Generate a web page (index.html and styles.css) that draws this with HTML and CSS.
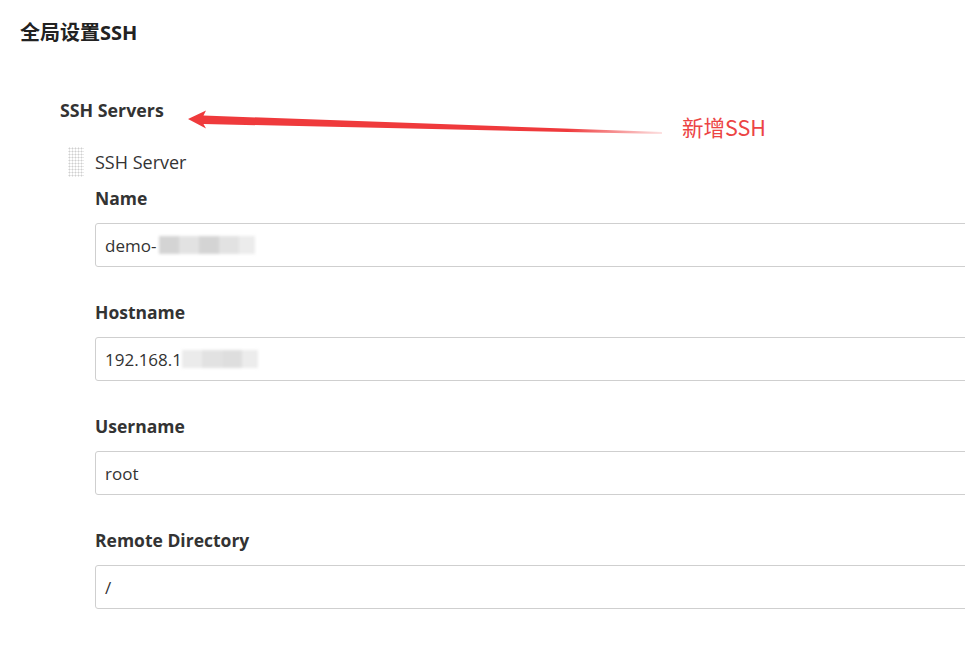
FILE: index.html
```html
<!DOCTYPE html>
<html lang="zh-CN">
<head>
  <meta charset="UTF-8" />
  <meta name="viewport" content="width=device-width, initial-scale=1.0" />
  <title>全局设置SSH</title>
  <link rel="stylesheet" href="styles.css">
</head>
<body>

<div class="page">
  <h1 class="section-title">全局设置SSH</h1>

  <!-- ssh servers -->
  <div class="servers">
    <h2 class="servers-title">SSH Servers</h2>

    <div class="chunk">
      <div class="handle"></div>
      <div class="chunk-body">
        <div class="chunk-name">SSH Server</div>

        <div class="field">
          <div class="field-label">Name</div>
          <div class="field-input">demo-<span class="masked masked-name"><i></i><i></i><i></i><i></i><i></i></span></div>
        </div>

        <div class="field">
          <div class="field-label">Hostname</div>
          <div class="field-input">192.168.1<span class="masked masked-host"><i></i><i></i><i></i><i></i></span></div>
        </div>

        <div class="field">
          <div class="field-label">Username</div>
          <div class="field-input">root</div>
        </div>

        <div class="field">
          <div class="field-label">Remote Directory</div>
          <div class="field-input">/</div>
        </div>
      </div>
    </div>
  </div>
</div>

<!-- annotation -->
<svg class="note-arrow" width="700" height="160" viewBox="0 0 700 160">
  <defs>
    <linearGradient id="fade" x1="188" y1="0" x2="662" y2="0" gradientUnits="userSpaceOnUse">
      <stop offset="0" stop-color="#ef3a3c"/>
      <stop offset="0.8" stop-color="#ef3a3c"/>
      <stop offset="1" stop-color="#ef3a3c" stop-opacity="0.15"/>
    </linearGradient>
  </defs>
  <polygon fill="url(#fade)" points="188,119 206,110.5 203.5,115.5 662,132 662,134 203.5,124 206,128.5"/>
</svg>
<div class="note-text">新增SSH</div>

</body>
</html>
```

FILE: styles.css
```css
  /* ─── page base ─────────────────────────────────────────── */
  body {
    margin: 0;
    font-family: "Open Sans", "Noto Sans CJK SC", sans-serif;
    color: #333;
    background: #fff;
    overflow: hidden;
  }

  .page {
    padding: 22px 0 0 20px;
  }

  .section-title {
    margin: 0;
    font-size: 20px;
    line-height: 22px;
    font-weight: bold;
    color: #222;
  }

  /* ─── servers block ────────────────────────────────────── */
  .servers {
    margin: 55px 0 0 40px;
  }

  .servers-title {
    margin: 0 0 30px;
    font-size: 17.8px;
    line-height: 22px;
    font-weight: bold;
    color: #333;
  }

  .chunk {
    display: flex;
  }

  .handle {
    flex: none;
    width: 16px;
    height: 30px;
    margin: -4px 11px 0 8px;
    background-image: radial-gradient(circle, #cfcfcf 0.9px, transparent 1.1px);
    background-size: 3px 3px;
  }

  .chunk-body {
    flex: 1;
  }

  .chunk-name {
    font-size: 18px;
    line-height: 22px;
    margin-bottom: 14px;
  }

  /* ─── fields ───────────────────────────────────────────── */
  .field {
    margin-bottom: 34px;
  }

  .field-label {
    font-size: 17.5px;
    line-height: 22px;
    font-weight: bold;
    margin-bottom: 14px;
  }

  .field-input {
    box-sizing: border-box;
    height: 44px;
    width: calc(100% + 40px);
    padding: 2px 9px 0;
    border: 1px solid #cfcfcf;
    border-radius: 3px;
    font-size: 17px;
    line-height: 40px;
    color: #333;
    display: flex;
    align-items: center;
  }

  /* blurred bits of the screenshot */
  .masked {
    display: inline-flex;
    height: 20px;
    margin-left: 3px;
    filter: blur(1.8px);
  }

  .masked i {
    display: block;
    width: 20px;
    height: 18px;
    background: #d4d4d4;
  }

  .masked i:nth-child(2n) {
    background: #e2e2e2;
  }

  .masked i:last-child {
    width: 16px;
    background: #ececec;
  }

  .masked-host {
    margin-left: 0;
  }

  .masked-host i {
    background: #ebebeb;
  }

  .masked-host i:nth-child(3) {
    background: #dedede;
  }

  /* ─── annotation ───────────────────────────────────────── */
  .note-arrow {
    position: absolute;
    top: 0;
    left: 0;
    pointer-events: none;
  }

  .note-text {
    position: absolute;
    top: 113px;
    left: 682px;
    font-family: "Noto Sans CJK SC", sans-serif;
    font-size: 21.5px;
    line-height: 28px;
    color: #ec4444;
  }
```
